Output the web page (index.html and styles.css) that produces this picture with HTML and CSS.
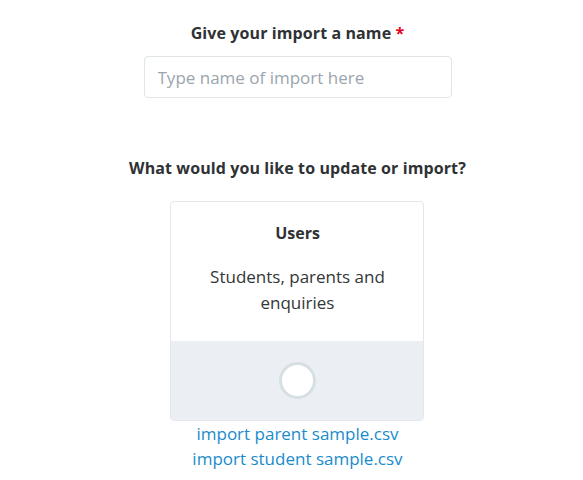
FILE: index.html
```html
<!DOCTYPE html>
<html lang="en">
<head>
<meta charset="utf-8">
<title>New import</title>
<link rel="stylesheet" href="styles.css">
</head>
<body>
<main class="import-form">
  <section class="field">
    <label class="field-label" for="import-name">Give your import a name <span class="required">*</span></label>
    <input class="text-input" id="import-name" type="text" placeholder="Type name of import here">
  </section>

  <section class="field field-type">
    <h2 class="field-label">What would you like to update or import?</h2>
    <div class="option-card">
      <div class="option-body">
        <h3 class="option-title">Users</h3>
        <p class="option-desc">Students, parents and enquiries</p>
      </div>
      <div class="option-footer">
        <span class="radio"></span>
      </div>
    </div>
    <div class="samples">
      <a class="sample-link" href="#">import parent sample.csv</a>
      <a class="sample-link" href="#">import student sample.csv</a>
    </div>
  </section>
</main>
</body>
</html>
```
FILE: styles.css
```css
html, body {
  margin: 0;
  padding: 0;
  background: #ffffff;
}

body {
  font-family: "Open Sans", Lato, "Liberation Sans", sans-serif;
  color: #333638;
}

.import-form {
  display: flex;
  flex-direction: column;
  align-items: center;
  padding: 22px 0 0 12px;
}

.field {
  display: flex;
  flex-direction: column;
  align-items: center;
}

.field-label {
  margin: 0;
  font-size: 16px;
  font-weight: 700;
  line-height: 22px;
  letter-spacing: 0.1px;
  color: #2f3234;
}

.required {
  color: #e3001b;
}

.text-input {
  box-sizing: border-box;
  width: 308px;
  height: 42px;
  margin-top: 12px;
  padding: 0 13px;
  border: 1px solid #dfe5e9;
  border-radius: 4px;
  font: inherit;
  font-size: 17px;
  color: #333638;
  outline: none;
}

.text-input::placeholder {
  color: #9aa5ad;
}

.field-type {
  margin-top: 59px;
}

.option-card {
  box-sizing: border-box;
  width: 254px;
  margin-top: 22px;
  border: 1px solid #e3e8ec;
  border-radius: 4px;
  overflow: hidden;
}

.option-body {
  height: 139px;
  padding-top: 20px;
  box-sizing: border-box;
  text-align: center;
}

.option-title {
  margin: 0;
  font-size: 16px;
  font-weight: 700;
  line-height: 22px;
  color: #2f3234;
}

.option-desc {
  margin: 20px auto 0;
  width: 210px;
  font-size: 17px;
  line-height: 26px;
  color: #333638;
}

.option-footer {
  height: 79px;
  background: #ebeef2;
  display: flex;
  align-items: center;
  justify-content: center;
}

.radio {
  box-sizing: border-box;
  width: 37px;
  height: 37px;
  border: 3px solid #d6dfe2;
  border-radius: 50%;
  background: #ffffff;
}

.samples {
  display: flex;
  flex-direction: column;
  align-items: center;
}

.sample-link {
  font-size: 17px;
  line-height: 25px;
  color: #1a8bcb;
  text-decoration: none;
}
```
